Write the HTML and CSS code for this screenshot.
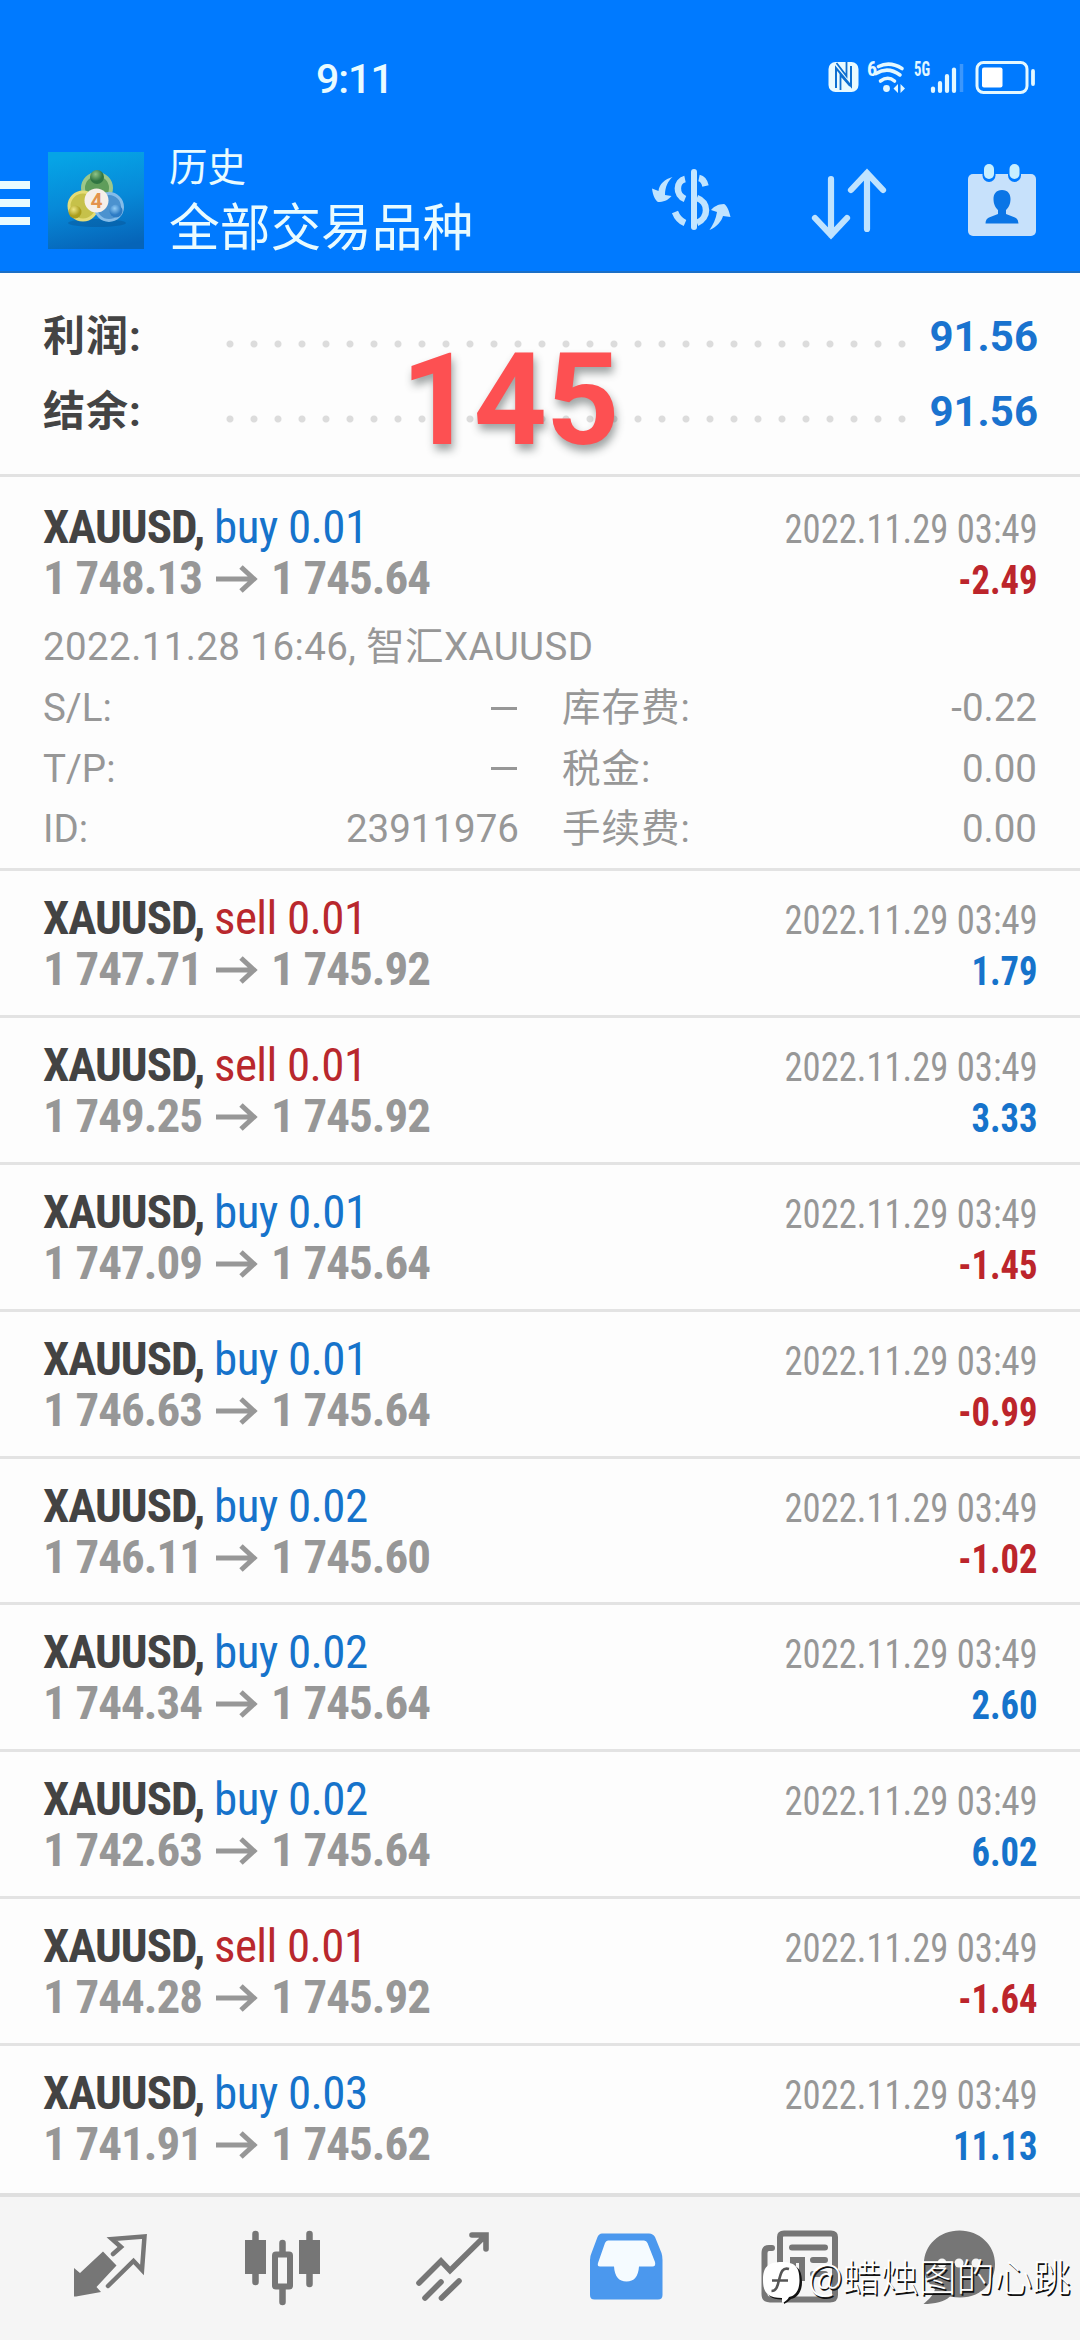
FILE: index.html
```html
<!DOCTYPE html>
<html lang="zh-CN">
<head>
<meta charset="utf-8">
<title>历史</title>
<link rel="stylesheet" href="styles.css">
</head>
<body>
<svg class="defs" width="0" height="0" aria-hidden="true">
  <symbol id="arrow" viewBox="0 0 42 28"><path d="M0 14H38M25 2L38 14L25 26" fill="none" stroke="#979797" stroke-width="5"/></symbol>
</svg>
<div class="screen">
  <header class="top">
    <div class="status">
      <span class="clock">9:11</span>
      <svg class="indicators" width="220" height="50" viewBox="0 0 220 50">
        <rect x="7.500" y="8" width="30" height="30" rx="7" fill="#e9faff"/>
        <path d="M15 34V14L30 32V12" fill="none" stroke="#0e6fd0" stroke-width="2"/>
        <path d="M19.500 36V21L29 32M15.500 9L25.500 22V8" fill="none" stroke="#0e6fd0" stroke-width="1.800"/>
        <text x="46" y="22" class="tiny">6</text>
        <g fill="none" stroke="#e4f8ff" stroke-width="3.600" stroke-linecap="round">
          <path d="M57.500 12.500Q69 7 81 14.500"/><path d="M55 19.500Q67 12 79 21"/><path d="M59.500 27Q67 21.500 73.500 27"/>
        </g>
        <circle cx="65.500" cy="34.500" r="3.400" fill="#e4f8ff"/>
        <path d="M77 30V39L72.500 34.500ZM79.500 30V39L84 34.500Z" fill="#e4f8ff"/>
        <text x="93" y="22" class="tiny" textLength="16" lengthAdjust="spacingAndGlyphs">5G</text>
        <g stroke="#e4f8ff" stroke-width="4.200" stroke-linecap="round">
          <path d="M112 34.500V37"/><path d="M119 29V37"/><path d="M126 22V37"/><path d="M133 15.500V37"/>
        </g>
        <path d="M140.500 10V38" stroke="#3c97fb" stroke-width="3.500"/>
        <rect x="156" y="8.500" width="50" height="30" rx="6.500" fill="none" stroke="#e4f8ff" stroke-width="3"/>
        <rect x="161" y="13.500" width="20.500" height="20" rx="2" fill="#fff"/>
        <path d="M212 17V30" stroke="#e4f8ff" stroke-width="3.800" stroke-linecap="round"/>
      </svg>
    </div>
    <div class="bar">
      <div class="burger"><i></i><i></i><i></i></div>
      <svg class="logo" width="96" height="97" viewBox="0 0 96 97">
        <defs>
          <linearGradient id="bg" x1=".4" y1="0" x2=".6" y2="1"><stop offset="0" stop-color="#06a4e6"/><stop offset=".5" stop-color="#0789d8"/><stop offset="1" stop-color="#0664b8"/></linearGradient>
          <radialGradient id="gr" cx=".4" cy=".3"><stop offset="0" stop-color="#8fc488"/><stop offset="1" stop-color="#2f7542"/></radialGradient>
          <radialGradient id="ye" cx=".4" cy=".3"><stop offset="0" stop-color="#eee683"/><stop offset="1" stop-color="#ab9e1e"/></radialGradient>
          <radialGradient id="bl" cx=".4" cy=".3"><stop offset="0" stop-color="#92ccf5"/><stop offset="1" stop-color="#2d7bc4"/></radialGradient>
        </defs>
        <rect width="96" height="97" fill="url(#bg)"/>
        <ellipse cx="49" cy="71" rx="29" ry="4" fill="#07518f" opacity=".4"/>
        <circle cx="49" cy="36" r="14" fill="#5f9d5b" stroke="#9cc78a" stroke-width="4"/>
        <circle cx="35" cy="54" r="14" fill="#c6c14a" stroke="#e4dc76" stroke-width="3"/>
        <circle cx="61" cy="55" r="13.500" fill="#4b92cf" stroke="#84bce9" stroke-width="3"/>
        <circle cx="49" cy="25" r="7" fill="url(#gr)"/>
        <circle cx="27" cy="60" r="6.500" fill="url(#ye)"/>
        <circle cx="68" cy="59" r="6.500" fill="url(#bl)"/>
        <circle cx="48.500" cy="48.500" r="12" fill="#f5efe9"/>
        <text x="48.500" y="56" class="four">4</text>
      </svg>
      <div class="heading"><span class="sub">历史</span><span class="title">全部交易品种</span></div>
      <div class="actions">
        <svg width="80" height="70" viewBox="0 0 80 70">
          <path d="M21.500 11C14 13 8 18 7.500 25L1 22.500C2 30 4 34 7 36C12 36 17 34.500 20.500 30L14 29C14 21 17 15 21.500 11Z" fill="#c0e4ff"/>
          <path d="M58.500 64C66 61 70.500 55 72 50L79.500 51C78 44 75.500 39 73 38C67 38 62.500 41 60 44L66 46C65 53 62 59 58.500 64Z" fill="#c0e4ff"/>
          <path d="M43 6V61" stroke="#c5e6ff" stroke-width="6" stroke-linecap="round"/>
          <path d="M34 13C25 15 24 29 34 33M24 46Q27 54 34 57M48 12Q53 13 54.500 20M46 32C58 36 58 52 46 57" fill="none" stroke="#c0e4ff" stroke-width="6.500"/>
        </svg>
        <svg width="80" height="76" viewBox="0 0 80 76">
          <g fill="none" stroke="#bfe3ff" stroke-width="6.200" stroke-linecap="round">
            <path d="M22 11V67M6 50L22 67L38 50"/><path d="M58 61V5M42 22L58 5L74 22"/>
          </g>
        </svg>
        <svg width="70" height="76" viewBox="0 0 70 76">
          <rect x="1" y="12" width="68" height="62" rx="5" fill="#c7e1fb"/>
          <rect x="15.500" y="0" width="13" height="20" rx="6.500" fill="#007aff"/><rect x="41" y="0" width="13" height="20" rx="6.500" fill="#007aff"/>
          <rect x="17" y="2" width="10" height="15" rx="5" fill="#c7efff"/><rect x="42.500" y="2" width="10" height="15" rx="5" fill="#c7efff"/>
          <path d="M35 28C29 28 26.500 32 26.500 37C26.500 43 29 46 31 48V52L22 55.500Q18.500 57 18.500 61.500H51.500Q51.500 57 48 55.500L39 52V48C41 46 43.500 43 43.500 37C43.500 32 41 28 35 28Z" fill="#0a75e6"/>
        </svg>
      </div>
    </div>
  </header>

  <section class="summary">
    <div class="sumrow"><b>利润:</b><span class="dots"></span><strong>91.56</strong></div>
    <div class="sumrow"><b>结余:</b><span class="dots"></span><strong>91.56</strong></div>
    <span class="stamp">145</span>
  </section>

  <main class="list">
    <article class="trade open">
      <div class="head">
        <div><p class="name">XAUUSD, <span class="buy">buy 0.01</span></p><p class="price"><span>1 748.13</span><svg><use href="#arrow"/></svg><span>1 745.64</span></p></div>
        <div class="right"><p>2022.11.29 03:49</p><p class="loss">-2.49</p></div>
      </div>
      <div class="detail">
        <p class="note">2022.11.28 16:46, 智汇XAUUSD</p>
        <p><span>S/L:</span><i></i></p><p><span class="cjk">库存费:</span><span>-0.22</span></p>
        <p><span>T/P:</span><i></i></p><p><span class="cjk">税金:</span><span>0.00</span></p>
        <p><span>ID:</span><span>23911976</span></p><p><span class="cjk">手续费:</span><span>0.00</span></p>
      </div>
    </article>
    <article class="trade"><div class="head">
      <div><p class="name">XAUUSD, <span class="sell">sell 0.01</span></p><p class="price"><span>1 747.71</span><svg><use href="#arrow"/></svg><span>1 745.92</span></p></div>
      <div class="right"><p>2022.11.29 03:49</p><p class="gain">1.79</p></div>
    </div></article>
    <article class="trade"><div class="head">
      <div><p class="name">XAUUSD, <span class="sell">sell 0.01</span></p><p class="price"><span>1 749.25</span><svg><use href="#arrow"/></svg><span>1 745.92</span></p></div>
      <div class="right"><p>2022.11.29 03:49</p><p class="gain">3.33</p></div>
    </div></article>
    <article class="trade"><div class="head">
      <div><p class="name">XAUUSD, <span class="buy">buy 0.01</span></p><p class="price"><span>1 747.09</span><svg><use href="#arrow"/></svg><span>1 745.64</span></p></div>
      <div class="right"><p>2022.11.29 03:49</p><p class="loss">-1.45</p></div>
    </div></article>
    <article class="trade"><div class="head">
      <div><p class="name">XAUUSD, <span class="buy">buy 0.01</span></p><p class="price"><span>1 746.63</span><svg><use href="#arrow"/></svg><span>1 745.64</span></p></div>
      <div class="right"><p>2022.11.29 03:49</p><p class="loss">-0.99</p></div>
    </div></article>
    <article class="trade"><div class="head">
      <div><p class="name">XAUUSD, <span class="buy">buy 0.02</span></p><p class="price"><span>1 746.11</span><svg><use href="#arrow"/></svg><span>1 745.60</span></p></div>
      <div class="right"><p>2022.11.29 03:49</p><p class="loss">-1.02</p></div>
    </div></article>
    <article class="trade"><div class="head">
      <div><p class="name">XAUUSD, <span class="buy">buy 0.02</span></p><p class="price"><span>1 744.34</span><svg><use href="#arrow"/></svg><span>1 745.64</span></p></div>
      <div class="right"><p>2022.11.29 03:49</p><p class="gain">2.60</p></div>
    </div></article>
    <article class="trade"><div class="head">
      <div><p class="name">XAUUSD, <span class="buy">buy 0.02</span></p><p class="price"><span>1 742.63</span><svg><use href="#arrow"/></svg><span>1 745.64</span></p></div>
      <div class="right"><p>2022.11.29 03:49</p><p class="gain">6.02</p></div>
    </div></article>
    <article class="trade"><div class="head">
      <div><p class="name">XAUUSD, <span class="sell">sell 0.01</span></p><p class="price"><span>1 744.28</span><svg><use href="#arrow"/></svg><span>1 745.92</span></p></div>
      <div class="right"><p>2022.11.29 03:49</p><p class="loss">-1.64</p></div>
    </div></article>
    <article class="trade"><div class="head">
      <div><p class="name">XAUUSD, <span class="buy">buy 0.03</span></p><p class="price"><span>1 741.91</span><svg><use href="#arrow"/></svg><span>1 745.62</span></p></div>
      <div class="right"><p>2022.11.29 03:49</p><p class="gain">11.13</p></div>
    </div></article>
  </main>

  <nav class="tabs">
    <svg viewBox="0 0 80 80">
      <path d="M4 34L10 39L33 17.500L46.500 31.500L26.500 53L31 58L6 62.500H4Z" fill="#767676"/>
      <path d="M43 20L51 13L42 5L74.500 2.500L72 36L63.500 27L38 52" fill="none" stroke="#767676" stroke-width="4.500" stroke-linecap="round"/>
    </svg>
    <svg viewBox="0 0 80 80">
      <g stroke="#767676" stroke-width="6.500" stroke-linecap="round"><path d="M13.500 0V48M40.500 9V68M67.500 0V50"/></g>
      <path d="M3 6H24V40H3ZM57 6H78V40H57Z" fill="#767676"/>
      <rect x="33" y="20.500" width="15" height="32" rx="1" fill="#f5f5f5" stroke="#767676" stroke-width="6"/>
    </svg>
    <svg viewBox="0 0 80 80">
      <path d="M5 49L27 27L36 36.500L71 2M58 1H72V15M11 64L27 48M27.500 64L45 47" fill="none" stroke="#767676" stroke-width="5.600" stroke-linecap="round"/>
    </svg>
    <svg viewBox="0 0 80 80">
      <path transform="translate(0 2)" d="M16 -2.500H63Q67 -2.500 69 1L75.500 17Q76.500 20 76.500 24V59Q76.500 63.500 72 63.500H8.500Q4 63.500 4 59V24Q4 20 5.500 17L11.500 1Q13 -2.500 16 -2.500Z" fill="#4b98ee"/>
      <path transform="translate(0 2)" d="M22 4.500H58Q60.500 4.500 61.500 7L69 26Q70 30.500 66.500 30.500H53Q52 45.500 40.500 45.500Q29 45.500 28 30.500H14Q11 30.500 12 27L19 7Q20 4.500 22 4.500Z" fill="#f5fbff"/>
    </svg>
    <svg viewBox="0 0 80 80">
      <g transform="translate(0 2)">
      <path d="M14 12H11Q6.500 12 6.500 17V58Q6.500 63.500 12 63.500H72Q77 63.500 77 59V1Q77 -2.500 73 -2.500H26Q22 -2.500 22 1V59Q22 63.500 16 63.500" fill="none" stroke="#767676" stroke-width="6" stroke-linecap="round"/>
      <path d="M34 11.500H67M55 24H67M55 38H67" fill="none" stroke="#767676" stroke-width="6" stroke-linecap="round"/>
      <rect x="35" y="24" width="9" height="18" fill="none" stroke="#767676" stroke-width="6"/>
      </g>
    </svg>
    <svg viewBox="0 0 80 80">
      <path transform="translate(0 2)" d="M41.500 -5.500C21.500 -5.500 6 9 6 28C6 40 10.500 48 17 53C15 60 11 63 5.500 68C17 68 26 66 32 60.500C59 66 77 49 77 28C77 9 61.500 -5.500 41.500 -5.500Z" fill="#767676"/>
      <g fill="#f5f5f5"><circle cx="24" cy="29" r="4.500"/><circle cx="41" cy="29" r="4.500"/><circle cx="58" cy="29" r="4.500"/></g>
    </svg>
    <div class="watermark">
      <svg width="42" height="46" viewBox="0 0 42 46">
        <path d="M22 4C36 4 40 10 40 22C40 32 35 38 29 39Q26 42 22 44V39.500C7 40 3 34 3 21C3 8 8 4 22 4Z" fill="#111"/>
        <path d="M20 2C34 2 37.500 8 37.500 20C37.500 31 33 36 27 37Q25 41 20 43V38C5 38 1 32 1 20C1 7 6 2 20 2Z" fill="#fff"/>
        <path d="M27 9C20 7 19 13 17 20C15.500 27 14 31 9.500 31M10 20.500H26" fill="none" stroke="#555" stroke-width="2.600"/>
      </svg>
      <span>@蜡烛图的心跳</span>
    </div>
  </nav>
</div>
</body>
</html>
```
FILE: styles.css
```css
* { box-sizing: border-box; margin: 0; padding: 0; }
body { background: #fdfdfd; font-family: Roboto, "Noto Sans CJK SC", sans-serif; }
svg { display: block; overflow: visible; flex: none; }
.defs { position: absolute; }
.screen { width: 1080px; height: 2340px; display: flex; flex-direction: column; overflow: hidden; }

.top { height: 273px; flex: none; background: #007aff; border-bottom: 2px solid #1b6fc6; color: #e9fbff; }
.status { height: 152px; padding: 54px 39px 0 316px; display: flex; justify-content: space-between; }
.clock { font-size: 41px; line-height: 50px; font-weight: 500; letter-spacing: -1px; }
.tiny { font: 700 20px "Roboto Condensed", sans-serif; fill: #e4f8ff; }
.four { font: 700 21px Roboto, sans-serif; fill: #e3934c; text-anchor: middle; }
.bar { display: flex; height: 97px; }
.burger { width: 30px; height: 44px; margin: 29px 18px 0 0; display: flex; flex-direction: column; justify-content: space-between; }
.burger i { height: 8px; background: #e9fbff; }
.heading { margin-left: 25px; display: flex; flex-direction: column; white-space: nowrap; }
.sub { font-size: 38.500px; line-height: 44px; margin-top: -6px; }
.title { font-size: 50.700px; line-height: 60px; margin-top: 9px; }
.actions { margin-left: auto; padding-right: 43px; display: flex; gap: 78px; padding-top: 10px; }
.actions svg:first-child { margin-top: 4px; }
.actions svg:nth-child(2) { margin-top: 6px; }

.summary { position: relative; height: 204px; flex: none; padding: 26px 42px 0 43px; border-bottom: 3px solid #e2e2e2; }
.sumrow { height: 75px; line-height: 75px; display: flex; align-items: center; color: #444; }
.sumrow b { font-size: 42px; width: 183px; letter-spacing: 1px; }
.sumrow strong { font-size: 42px; color: #1a73cf; margin-left: auto; }
.dots { width: 696px; height: 8px; margin-top: 14px; background: radial-gradient(circle at 4px 4px, #dcdcdc 3px, transparent 4px) 0 0 / 24px 8px; }
.stamp { position: absolute; left: 401px; top: 52px; font-size: 128px; line-height: 150px; font-weight: 700; color: #fd5052; letter-spacing: -1px; text-shadow: 2px 6px 9px rgba(40,50,50,.45); }

.list { flex: 1; }
.trade { height: 146.900px; border-bottom: 3px solid #e3e3e3; padding: 21px 42px 0 43px; }
.trade.open { height: 394px; padding-top: 24px; }
.trade:last-child { border: 0; }
.head { display: flex; justify-content: space-between; height: 102px; font-family: "Roboto Condensed", Roboto, sans-serif; line-height: 51px; white-space: nowrap; }
.name { font-size: 47px; font-weight: 700; color: #434343; letter-spacing: -1px; }
.name span { font-weight: 400; letter-spacing: -.6px; }
.buy, .gain { color: #1673cb; }
.name .sell { color: #b9282d; }
.price { display: flex; align-items: center; font-size: 47px; font-weight: 700; color: #979797; letter-spacing: -1px; }
.price svg { width: 42px; height: 28px; margin: 3px 13px 0 15px; }
.price span:first-child { width: 158px; }
.right { text-align: right; font-size: 40px; color: #979797; padding-top: 3px; transform: scaleX(.915); transform-origin: right; }
.right .gain, .right .loss { font-weight: 700; }
.right .gain { color: #1673cb; }
.right .loss { color: #bc252b; }
.detail { margin-top: 14px; display: grid; grid-template-columns: 476px 475px; column-gap: 43px; grid-auto-rows: 60.800px; line-height: 60.800px; font-size: 38.500px; color: #979797; }
.detail p { display: flex; justify-content: space-between; align-items: center; }
.detail .note { grid-column: 1 / 3; display: block; letter-spacing: .4px; }
.detail .cjk { letter-spacing: 1px; }
.detail i { width: 26px; height: 3px; background: #979797; margin: 0 2px 0 0; }

.tabs { position: relative; height: 149px; flex: none; background: #f5f5f5; border-top: 4px solid #dfdfdf; padding: 37px 0 0 70px; display: flex; gap: 92px; }
.tabs > svg { width: 80px; height: 80px; }
.tabs > svg:nth-child(6) { margin-left: -12px; }
.watermark { position: absolute; left: 762px; top: 63px; display: flex; gap: 4px; font: 300 38px/30px "Noto Sans CJK SC", sans-serif; color: #fff; text-shadow: 1.500px 1.500px 0 #111; white-space: nowrap; }
```
